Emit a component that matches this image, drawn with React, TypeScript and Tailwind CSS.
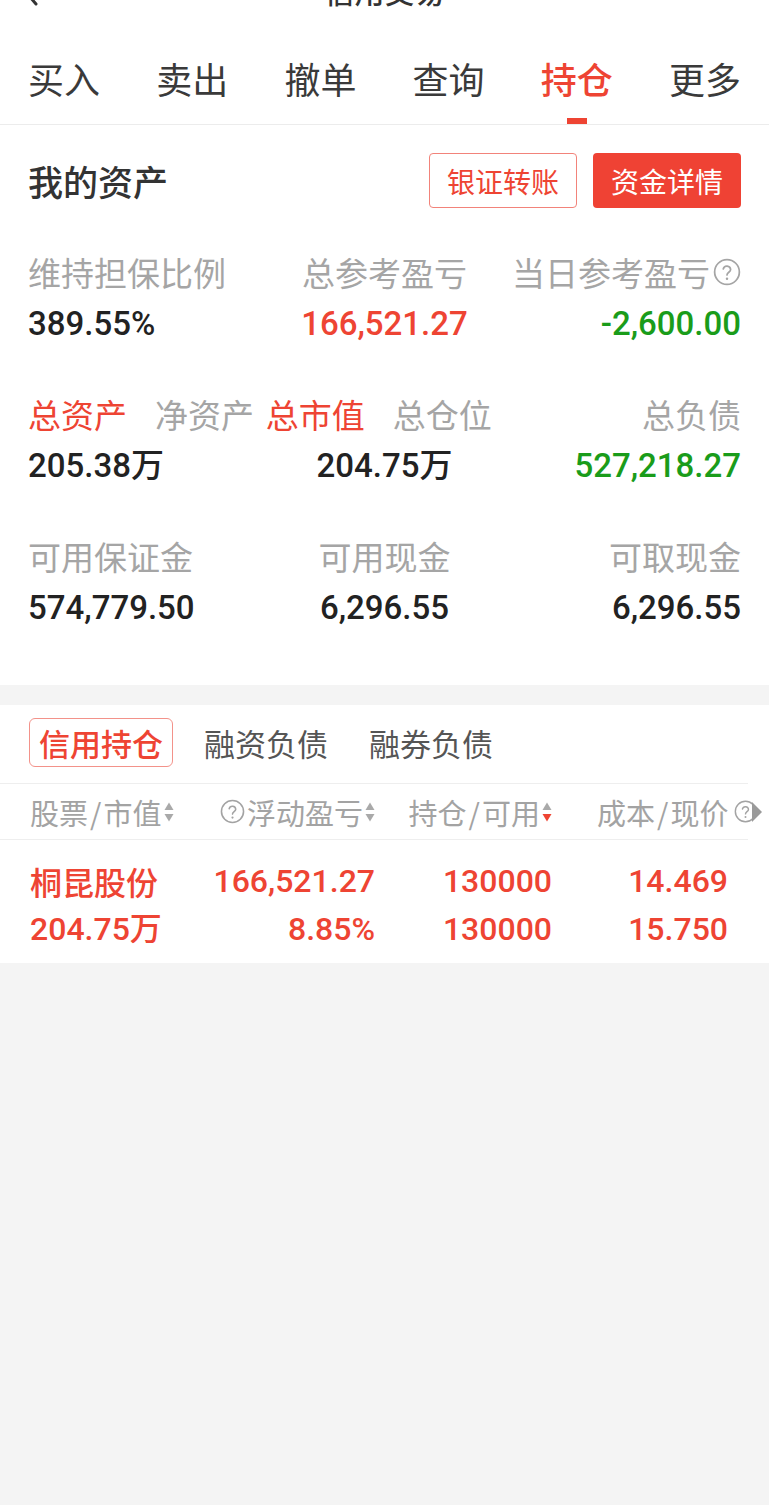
import React from 'react';

const tabs = ['买入', '卖出', '撤单', '查询', '持仓', '更多'];

const num = "font-['Roboto','Noto_Sans_CJK_SC',sans-serif]";

function HelpIcon({ className }: { className?: string }) {
  return (
    <svg viewBox="0 0 24 24" className={`shrink-0 ${className ?? ''}`} fill="none" stroke="currentColor" strokeWidth={1.5}>
      <circle cx="12" cy="12" r="10.6" />
      <path d="M8.8 9.4a3.2 3.2 0 0 1 6.3.5c0 2.2-3.1 2.4-3.1 4.6" strokeLinecap="round" />
      <circle cx="12" cy="17.8" r="1.05" fill="currentColor" stroke="none" />
    </svg>
  );
}

function SortIcon({ down }: { down?: boolean }) {
  return (
    <svg viewBox="0 0 10 22" className="w-[10px] h-[22px] shrink-0">
      <path d="M5 1.5 L9.5 9 H0.5 Z" fill="#a9a9a9" />
      <path d="M0.5 13 H9.5 L5 20.5 Z" fill={down ? '#ee4433' : '#a9a9a9'} />
    </svg>
  );
}

function Slash() {
  return <span className="mx-[2px]">/</span>;
}

export default function App() {
  return (
    <div className="min-h-[1505px] bg-[#f4f4f4] overflow-hidden font-['Noto_Sans_CJK_SC',sans-serif]">
      {/* nav bar, mostly scrolled off */}
      <div className="bg-white">
        <div className="-mt-[40px] h-[60px] flex items-center px-[20px]">
          <svg viewBox="0 0 20 34" className="w-[20px] h-[34px]" fill="none" stroke="#333" strokeWidth={3} strokeLinecap="round">
            <path d="M16 3 L4 17 L16 31" />
          </svg>
          <div className="flex-1 text-center text-[30px] leading-[36px] font-medium text-[#333]">信用交易</div>
          <div className="w-[20px]" />
        </div>

        <div className="grid grid-cols-6 border-b border-[#ececec]">
          {tabs.map((t) => {
            const active = t === '持仓';
            return (
              <div key={t} className="flex flex-col items-center pt-[38px]">
                <span className={`text-[36px] leading-[40px] ${active ? 'text-[#ee4433] font-medium' : 'text-[#3a3a3a]'}`}>{t}</span>
                <span className={`mt-[20px] h-[6px] w-[20px] ${active ? 'bg-[#ee4433]' : 'bg-transparent'}`} />
              </div>
            );
          })}
        </div>
      </div>

      {/* my assets */}
      <div className="bg-white px-[28px] pt-[28px] pb-[57px]">
        <div className="flex items-center justify-between h-[55px]">
          <span className="text-[35px] leading-[40px] font-medium text-[#333]">我的资产</span>
          <div className="flex gap-[16px]">
            <button className="w-[148px] h-[55px] rounded-[4px] border border-[#f2837a] text-[#ee4433] text-[28px] leading-[40px]">银证转账</button>
            <button className="w-[148px] h-[55px] rounded-[4px] bg-[#ef4234] text-white text-[28px] leading-[40px]">资金详情</button>
          </div>
        </div>

        <div className="grid grid-cols-3 mt-[44px]">
          <div className="text-[33px] leading-[40px] text-[#a5a5a5] whitespace-nowrap">维持担保比例</div>
          <div className="text-[33px] leading-[40px] text-[#a5a5a5] text-center whitespace-nowrap">总参考盈亏</div>
          <div className="flex items-center justify-end text-[33px] leading-[40px] text-[#a5a5a5] whitespace-nowrap">
            当日参考盈亏<HelpIcon className="w-[28px] h-[28px] ml-[3px]" />
          </div>
          <div className={`mt-[12px] text-[33px] leading-[40px] font-medium text-[#222] ${num}`}>389.55%</div>
          <div className={`mt-[12px] text-[33px] leading-[40px] font-medium text-[#ee4433] text-center ${num}`}>166,521.27</div>
          <div className={`mt-[12px] text-[33px] leading-[40px] font-medium text-[#1a9c1a] text-right ${num}`}>-2,600.00</div>
        </div>

        <div className="grid grid-cols-3 mt-[50px]">
          <div className="flex gap-[28px] text-[33px] leading-[40px] whitespace-nowrap">
            <span className="text-[#ee4433]">总资产</span>
            <span className="text-[#a5a5a5]">净资产</span>
          </div>
          <div className="flex gap-[28px] text-[33px] leading-[40px] whitespace-nowrap">
            <span className="text-[#ee4433]">总市值</span>
            <span className="text-[#a5a5a5]">总仓位</span>
          </div>
          <div className="text-[33px] leading-[40px] text-[#a5a5a5] text-right">总负债</div>
          <div className={`mt-[12px] text-[33px] leading-[40px] font-medium text-[#222] ${num}`}>205.38万</div>
          <div className={`mt-[12px] text-[33px] leading-[40px] font-medium text-[#222] text-center ${num}`}>204.75万</div>
          <div className={`mt-[12px] text-[33px] leading-[40px] font-medium text-[#1a9c1a] text-right ${num}`}>527,218.27</div>
        </div>

        <div className="grid grid-cols-3 mt-[50px]">
          <div className="text-[33px] leading-[40px] text-[#a5a5a5]">可用保证金</div>
          <div className="text-[33px] leading-[40px] text-[#a5a5a5] text-center">可用现金</div>
          <div className="text-[33px] leading-[40px] text-[#a5a5a5] text-right">可取现金</div>
          <div className={`mt-[12px] text-[33px] leading-[40px] font-medium text-[#222] ${num}`}>574,779.50</div>
          <div className={`mt-[12px] text-[33px] leading-[40px] font-medium text-[#222] text-center ${num}`}>6,296.55</div>
          <div className={`mt-[12px] text-[33px] leading-[40px] font-medium text-[#222] text-right ${num}`}>6,296.55</div>
        </div>
      </div>

      {/* holdings */}
      <div className="relative mt-[20px] bg-white pb-[10px]">
        <div className="flex gap-[21px] pl-[29px] pt-[13px]">
          <span className="h-[49px] px-[9px] rounded-[6px] border border-[#f3928a] text-[31px] leading-[47px] font-medium text-[#ee4433]">信用持仓</span>
          <span className="h-[49px] px-[9px] border border-transparent text-[31px] leading-[47px] text-[#555]">融资负债</span>
          <span className="h-[49px] px-[9px] border border-transparent text-[31px] leading-[47px] text-[#555]">融券负债</span>
        </div>

        <div className="mt-[16px] w-[748px]">
          <div className="flex h-[57px] items-center border-y border-[#eeeeee] text-[29px] leading-[40px] text-[#a3a3a3] whitespace-nowrap">
            <div className="w-[190px] pl-[30px] flex items-center gap-[3px]">
              <span>股票<Slash />市值</span><SortIcon />
            </div>
            <div className="w-[185px] flex items-center justify-end gap-[2px]">
              <HelpIcon className="w-[25px] h-[25px]" />浮动盈亏<SortIcon />
            </div>
            <div className="w-[177px] flex items-center justify-end gap-[2px]">
              <span>持仓<Slash />可用</span><SortIcon down />
            </div>
            <div className="w-[176px] pl-[45px] flex items-center gap-[6px]">
              <span>成本<Slash />现价</span><HelpIcon className="w-[23px] h-[23px]" />
            </div>
          </div>

          <div className="pt-[17px] text-[32px] leading-[48px] text-[#ee4433] font-medium">
            <div className="flex">
              <div className="w-[190px] pl-[30px]">桐昆股份</div>
              <div className={`w-[185px] text-right ${num}`}>166,521.27</div>
              <div className={`w-[177px] text-right ${num}`}>130000</div>
              <div className={`w-[176px] text-right ${num}`}>14.469</div>
            </div>
            <div className="flex">
              <div className={`w-[190px] pl-[30px] ${num}`}>204.75万</div>
              <div className={`w-[185px] text-right ${num}`}>8.85%</div>
              <div className={`w-[177px] text-right ${num}`}>130000</div>
              <div className={`w-[176px] text-right ${num}`}>15.750</div>
            </div>
          </div>
        </div>

        <svg viewBox="0 0 12 22" className="absolute right-[6px] top-[96px] w-[12px] h-[22px]">
          <path d="M1 1 L11 11 L1 21 Z" fill="#9a9a9a" />
        </svg>
      </div>
    </div>
  );
}
